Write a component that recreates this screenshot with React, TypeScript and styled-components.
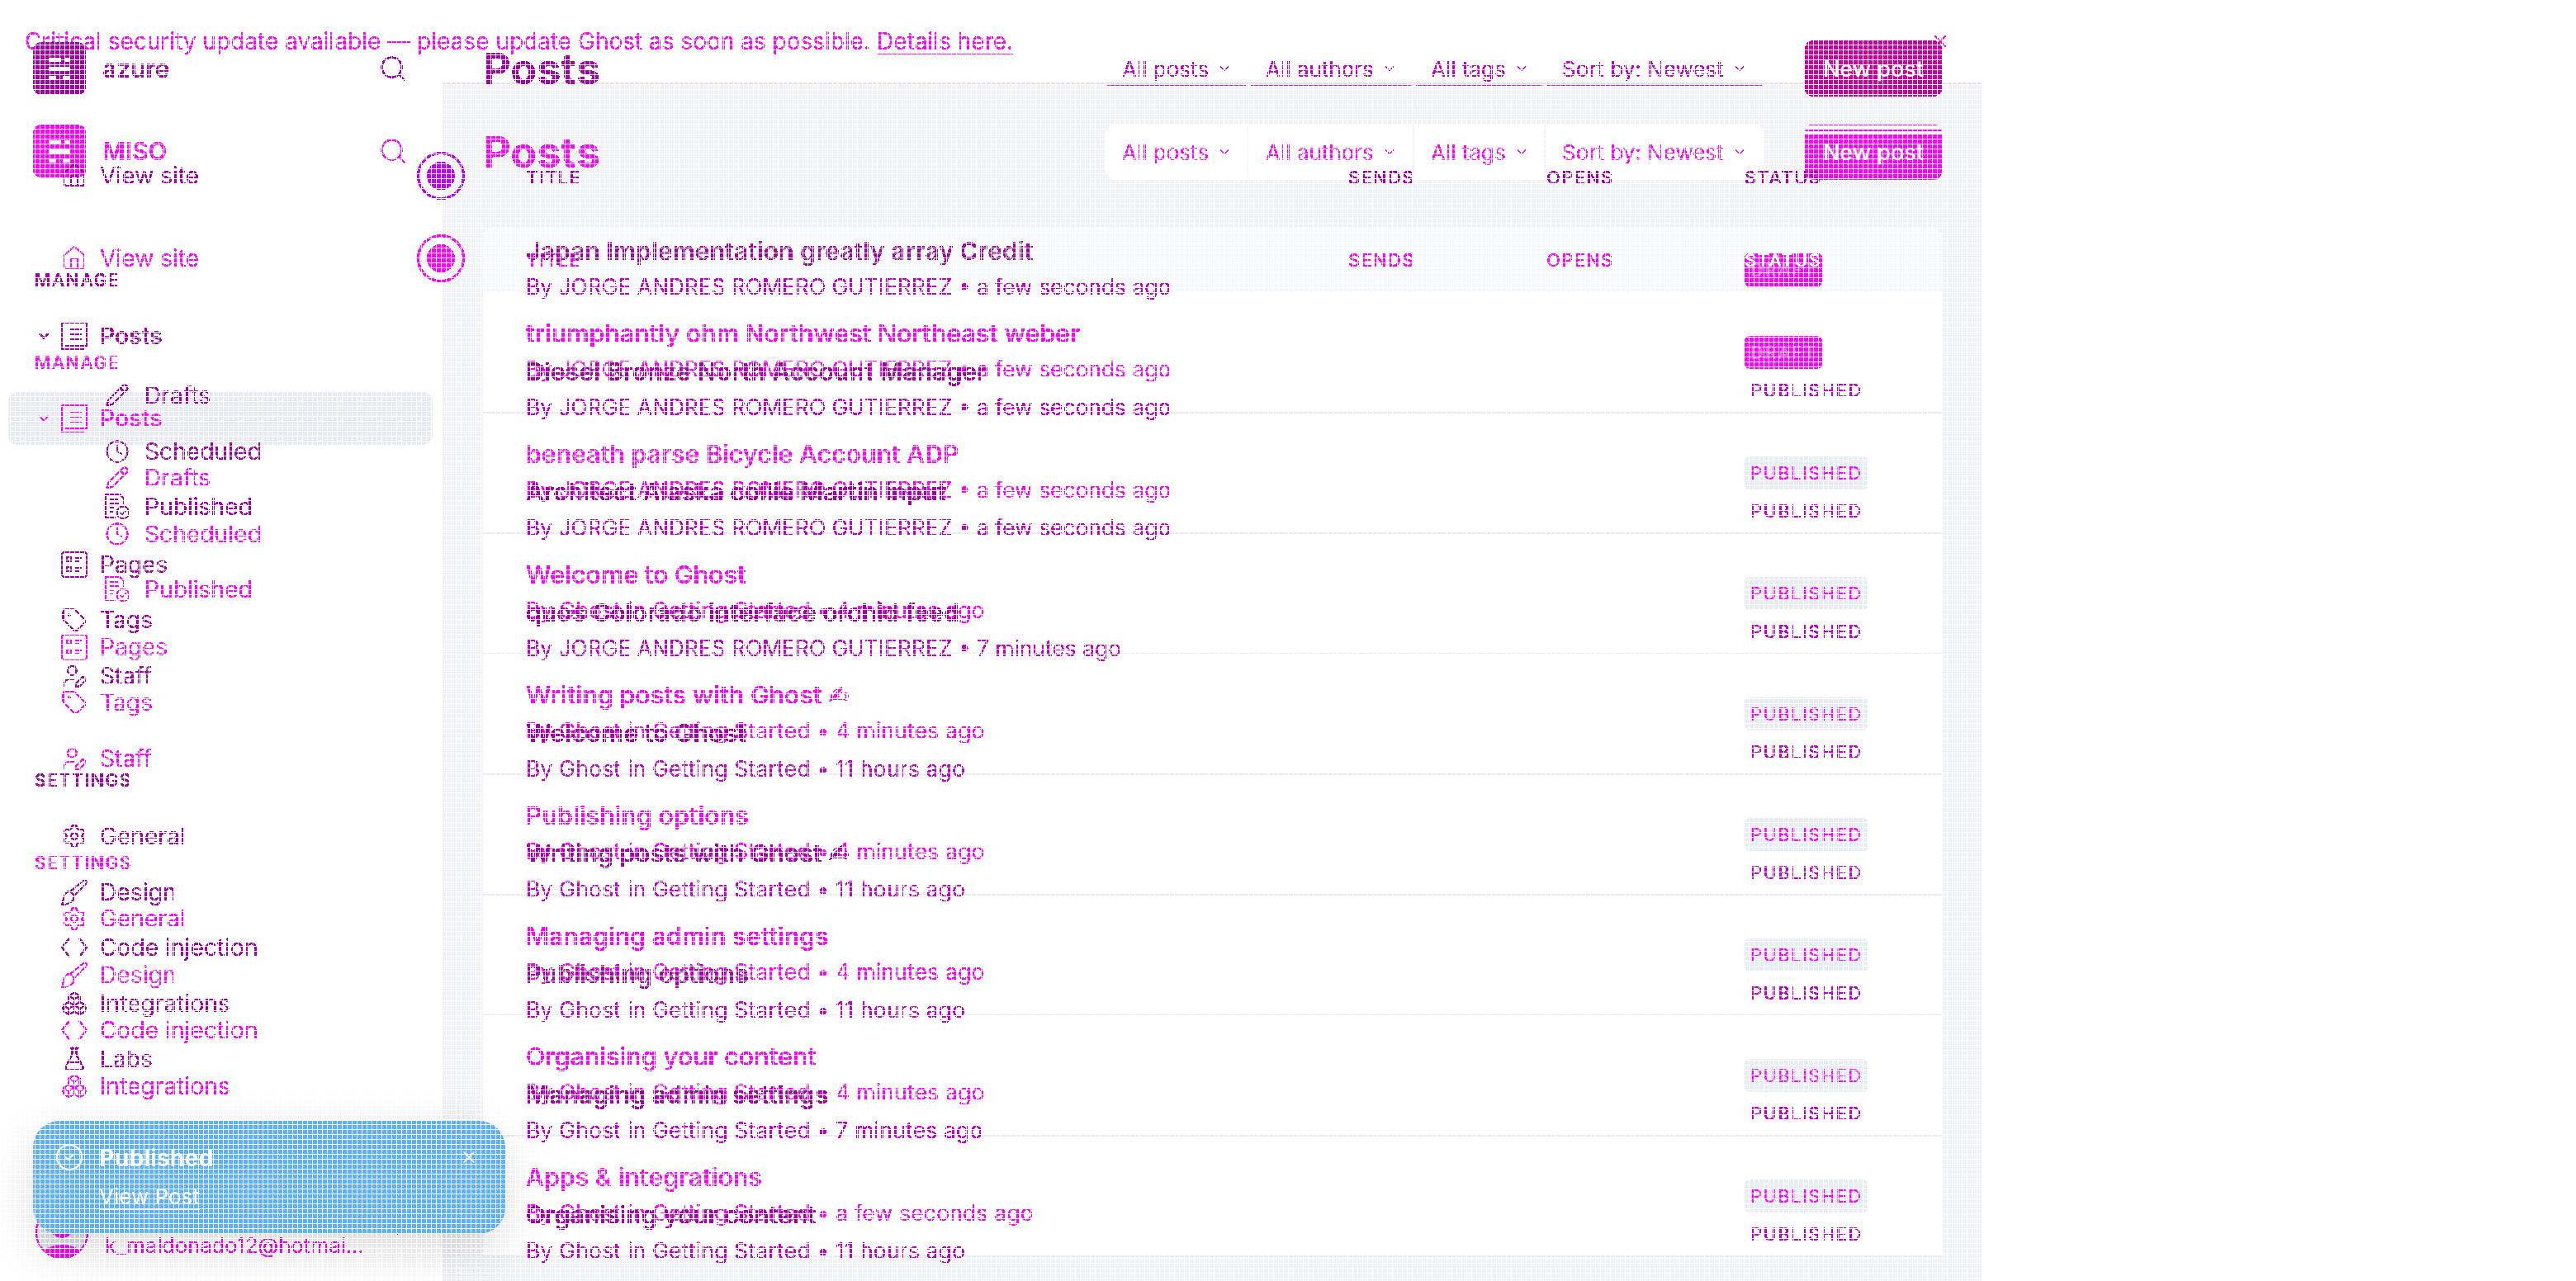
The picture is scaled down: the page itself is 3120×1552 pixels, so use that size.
import styled, { createGlobalStyle, css } from "styled-components";
import {
  Boxes,
  ChevronDown,
  CircleCheck,
  Clock,
  FlaskConical,
  Home,
  Pencil,
  Search,
  Settings,
  Tag,
  UserPen,
  X,
} from "lucide-react";
import type { ReactNode } from "react";

const GlobalStyle = createGlobalStyle`
  html, body {
    margin: 0;
    background: #fff;
    font-family: Inter, "DejaVu Sans", sans-serif;
  }
`;

// hard edged text, the capture has no anti-aliasing
const crisp = css`
  filter: url(#crisp);
`;

const Stage = styled.div`
  position: relative;
  width: 3120px;
  height: 1552px;
  overflow: hidden;
  background: #fff;
`;

const Frame = styled.div`
  position: relative;
  width: 2400px;
  height: 1552px;
  overflow: hidden;
  display: flex;
  flex-direction: column;
`;

/* the white 1px lattice that runs over the whole capture */
const Mesh = styled.div`
  position: absolute;
  inset: 0;
  z-index: 5;
  pointer-events: none;
  background-image: repeating-linear-gradient(to right, #fff 0 1px, transparent 1px 6px),
    repeating-linear-gradient(to bottom, #fff 0 1px, transparent 1px 6px);
`;

const Banner = styled.div`
  ${crisp}
  height: 100px;
  flex: none;
  padding: 0 38px 0 30px;
  box-sizing: border-box;
  display: flex;
  align-items: center;
  justify-content: space-between;
  color: #ff00ff;
  font-size: 28px;

  a {
    color: inherit;
    text-decoration: underline;
    text-underline-offset: 5px;
  }
`;

const View = styled.div<{ $ghost?: boolean }>`
  --ink: ${(p) => (p.$ghost ? "#a000a4" : "#ff00ff")};
  --soft: ${(p) => (p.$ghost ? "#c000c8" : "#ff00ff")};
  --status: ${(p) => (p.$ghost ? "#bb00cc" : "#ff00ff")};
  --ring: ${(p) => (p.$ghost ? "#c000f0" : "#ff00ff")};
  --action: ${(p) => (p.$ghost ? "#c800a0" : "#ff00ff")};
  --page: ${(p) => (p.$ghost ? "transparent" : "#f1f2f6")};
  --card: ${(p) => (p.$ghost ? "transparent" : "#ffffff")};
  --head: ${(p) => (p.$ghost ? "transparent" : "#f8f9fb")};
  --line: ${(p) => (p.$ghost ? "transparent" : "#e8ecf2")};
  --edge: ${(p) => (p.$ghost ? "transparent" : "#e2e3e7")};
  --pill: ${(p) => (p.$ghost ? "transparent" : "#e8edf3")};
  --active: ${(p) => (p.$ghost ? "transparent" : "#e9ebf2")};
  --bar-top: ${(p) => (p.$ghost ? "47px" : "48px")};
  --card-top: ${(p) => (p.$ghost ? "58px" : "57px")};

  display: flex;
  width: 2400px;
  height: ${(p) => (p.$ghost ? "1552px" : "1452px")};
  overflow: hidden;
  ${(p) =>
    p.$ghost &&
    css`
      position: absolute;
      top: 0;
      left: 0;
      ${crisp}
    `}
`;

const Sidebar = styled.aside`
  ${crisp}
  position: relative;
  width: 536px;
  flex: none;
  box-sizing: border-box;
  padding-top: 51px;
  display: flex;
  flex-direction: column;
  color: var(--ink);
`;

const Brand = styled.div`
  height: 64px;
  padding: 0 42px 0 40px;
  display: flex;
  align-items: center;
  gap: 20px;
  font-size: 30px;
  font-weight: 600;

  svg:last-child {
    margin-left: auto;
  }
`;

const BrandGap = styled.div`
  height: 64px;
`;

const SectionLabel = styled.div`
  height: 30px;
  line-height: 30px;
  margin: 78px 0 19px 42px;
  font-size: 21px;
  font-weight: 600;
  letter-spacing: 1.6px;
`;

const Row = styled.div<{ $active?: boolean; $sub?: boolean }>`
  position: relative;
  height: 64px;
  margin: 1.75px 12px 1.75px 10px;
  padding-left: ${(p) => (p.$sub ? "117px" : "33px")};
  display: flex;
  align-items: center;
  border-radius: 12px;
  font-size: 28.2px;
  font-weight: ${(p) => (p.$active ? 600 : 400)};
  background: ${(p) => (p.$active ? "var(--active)" : "transparent")};
`;

const RowGap = styled.div<{ $size: number }>`
  height: ${(p) => p.$size}px;
`;

const CaretSlot = styled.span`
  width: 31px;
  flex: none;
  display: flex;
`;

const IconSlot = styled.span<{ $sub?: boolean }>`
  width: ${(p) => (p.$sub ? "30px" : "32px")};
  height: 32px;
  margin-right: ${(p) => (p.$sub ? "18px" : "15px")};
  flex: none;
  display: flex;
  align-items: center;
  justify-content: center;
`;

const Collapse = styled.svg`
  position: absolute;
  left: 495px;
  top: 3px;
  width: 58px;
  height: 58px;
  color: var(--ring);
`;

const Footer = styled.div`
  margin-top: auto;
  padding: 0 46px 27px 43px;
  display: flex;
  align-items: center;
  gap: 20px;

  svg:last-child {
    margin-left: auto;
    color: #ff00ff;
  }
`;

const Email = styled.div`
  margin-top: 30px;
  font-size: 25.5px;
  color: #ff00ff;
`;

const Main = styled.main`
  flex: 1;
  min-width: 0;
  box-sizing: border-box;
  padding: var(--bar-top) 48px 0 49px;
  background: var(--page);
  border-top: 2px solid var(--edge);
`;

const Toolbar = styled.div`
  height: 68px;
  display: flex;
  align-items: center;
`;

const Title = styled.h1`
  ${crisp}
  margin: 0 auto 0 0;
  font-size: 52px;
  font-weight: 700;
  color: var(--ink);
`;

const Filters = styled.div`
  position: relative;
  height: 68px;
  display: flex;
  border-radius: 12px;
  background: var(--card);
`;

const Filter = styled.div<{ $width: number; $ghost?: boolean }>`
  ${crisp}
  position: relative;
  width: ${(p) => p.$width}px;
  box-sizing: border-box;
  padding-left: 20px;
  display: flex;
  align-items: center;
  gap: 10px;
  font-size: 26px;
  color: var(--soft);
  border-left: 2px solid var(--page);

  &:first-child {
    border-left: 0;
  }

  ${(p) =>
    p.$ghost &&
    `&::after {
      content: "";
      position: absolute;
      left: 2px;
      right: 2px;
      top: 53px;
      height: 2px;
      background: #ff00ff;
    }`}
`;

const NewPost = styled.div<{ $ghost?: boolean }>`
  width: 166px;
  height: 68px;
  margin-left: 50px;
  border-radius: 10px;
  display: flex;
  align-items: center;
  justify-content: center;
  color: #fff;
  font-size: 27px;
  font-weight: 500;
  background: ${(p) =>
    p.$ghost
      ? "var(--action)"
      : "linear-gradient(to bottom, #ff00ff 0 2px, #fff 2px 7px, #ff00ff 7px 9px, #fff 9px 13px, #ff00ff 13px)"};
`;

const Card = styled.section`
  margin-top: var(--card-top);
  border-radius: 12px 12px 0 0;
  overflow: hidden;
  background: var(--card);
`;

const Grid = styled.div`
  display: grid;
  grid-template-columns: 996px 240px 240px 1fr;
  padding-left: 52px;
`;

const Head = styled(Grid)`
  height: 80px;
  align-items: center;
  background: var(--head);
  font-size: 22px;
  font-weight: 500;
  letter-spacing: 1.3px;
  color: var(--ink);
`;

const HeadCell = styled.span`
  ${crisp}
`;

const StatusHead = styled(HeadCell)<{ $ghost?: boolean }>`
  position: relative;
  z-index: 2;
  color: ${(p) => (p.$ghost ? "var(--ink)" : "#ffffff")};
`;

const PostRow = styled(Grid)`
  height: 146px;
  box-sizing: border-box;
  padding-top: 30px;
  border-bottom: 2px solid var(--line);
`;

const PostTitle = styled.div`
  ${crisp}
  font-size: 30.2px;
  line-height: 38px;
  font-weight: 600;
  color: var(--ink);
`;

const PostMeta = styled.div<{ $loose?: boolean }>`
  ${crisp}
  margin-top: 7px;
  font-size: 26.4px;
  line-height: 34px;
  letter-spacing: ${(p) => (p.$loose ? "0.25px" : "0")};
  color: var(--soft);
`;

const Status = styled.span<{ $draft?: boolean }>`
  height: 40px;
  margin-top: 22px;
  padding: 0 7px;
  box-sizing: border-box;
  display: inline-flex;
  align-items: center;
  justify-self: start;
  border-radius: 6px;
  font-size: 22px;
  font-weight: 500;
  letter-spacing: 1.4px;
  color: ${(p) => (p.$draft ? "#ff59ff" : "var(--status)")};
  background: ${(p) => (p.$draft ? "#ff00ff" : "var(--pill)")};
`;

const Toast = styled.div`
  position: absolute;
  left: 40px;
  bottom: 57px;
  z-index: 3;
  width: 572px;
  height: 137px;
  box-sizing: border-box;
  padding: 26px 32px 0 26px;
  border-radius: 32px;
  background: #5cb1f7;
  color: #fff;
  box-shadow: 0 20px 60px rgba(0, 0, 0, 0.16);
`;

const ToastLine = styled.div`
  display: flex;
  align-items: center;
  gap: 18px;
  font-size: 29px;
  font-weight: 600;

  svg:last-child {
    margin-left: auto;
  }
`;

const ToastLink = styled.a`
  display: block;
  margin: 14px 0 0 54px;
  font-size: 26px;
  color: inherit;
  text-decoration: underline;
  text-underline-offset: 5px;
`;

const AUTHOR = "JORGE ANDRES ROMERO GUTIERREZ";
const GHOST_BY = "Ghost in Getting Started";

type Post = { title: string; by: string; when: string; draft?: boolean };

const currentPosts: Post[] = [
  { title: "triumphantly ohm Northwest Northeast weber", by: AUTHOR, when: "a few seconds ago", draft: true },
  { title: "beneath parse Bicycle Account ADP", by: AUTHOR, when: "a few seconds ago" },
  { title: "Welcome to Ghost", by: GHOST_BY, when: "4 minutes ago" },
  { title: "Writing posts with Ghost ✍", by: GHOST_BY, when: "4 minutes ago" },
  { title: "Publishing options", by: GHOST_BY, when: "4 minutes ago" },
  { title: "Managing admin settings", by: GHOST_BY, when: "4 minutes ago" },
  { title: "Organising your content", by: GHOST_BY, when: "4 minutes ago" },
  { title: "Apps & integrations", by: GHOST_BY, when: "a few seconds ago" },
];

const previousPosts: Post[] = [
  { title: "Japan Implementation greatly array Credit", by: AUTHOR, when: "a few seconds ago", draft: true },
  { title: "Diesel Bronze North Account Manager", by: AUTHOR, when: "a few seconds ago" },
  { title: "Architect Alaska collie Martin input", by: AUTHOR, when: "a few seconds ago" },
  { title: "quos Colorado interface orchid feed", by: AUTHOR, when: "7 minutes ago" },
  { title: "Welcome to Ghost", by: GHOST_BY, when: "11 hours ago" },
  { title: "Writing posts with Ghost ✍", by: GHOST_BY, when: "11 hours ago" },
  { title: "Publishing options", by: GHOST_BY, when: "11 hours ago" },
  { title: "Managing admin settings", by: GHOST_BY, when: "7 minutes ago" },
  { title: "Organising your content", by: GHOST_BY, when: "11 hours ago" },
];

const stroke = 1.5;

function PostsIcon() {
  return (
    <svg width="32" height="34" viewBox="0 0 32 34" fill="none" stroke="currentColor" strokeWidth="2">
      <path d="M1 1h30v28H5" />
      <path d="M1 1v32h28" />
      <path d="M10 9h15M10 15h15M10 21h15" />
    </svg>
  );
}

function PagesIcon() {
  return (
    <svg width="32" height="32" viewBox="0 0 32 32" fill="none" stroke="currentColor" strokeWidth="2">
      <rect x="1" y="1" width="30" height="30" rx="3" />
      <rect x="7" y="7" width="5" height="5" />
      <rect x="7" y="19" width="5" height="5" />
      <path d="M17 8h8M17 12h6M17 20h8M17 24h6" />
    </svg>
  );
}

function PublishedIcon() {
  return (
    <svg width="30" height="32" viewBox="0 0 30 32" fill="none" stroke="currentColor" strokeWidth="1.6">
      <path d="M13 29H1V1h17l5 5v7" />
      <path d="M5 7h11M5 12h13M5 17h7M5 22h5" />
      <circle cx="22" cy="23" r="7.5" />
      <path d="m18.5 23 2.5 2.5 4.5-5" />
    </svg>
  );
}

function BrushIcon() {
  return (
    <svg width="32" height="32" viewBox="0 0 32 32" fill="none" stroke="currentColor" strokeWidth="1.8">
      <path d="M31 3c-1-2-3-2-4-1L11 15l5 5L30 6c1-1 1-2 1-3z" />
      <path d="M11 15c-4 0-6 2-7 5l-3 11c7 0 13-3 14-7 .5-2 .5-3 1-4" />
    </svg>
  );
}

function CodeIcon() {
  return (
    <svg width="32" height="32" viewBox="0 0 32 32" fill="none" stroke="currentColor" strokeWidth="2">
      <path d="M10 5 1 16l9 11M22 5l9 11-9 11" />
    </svg>
  );
}

function LogoMark() {
  return (
    <svg width="64" height="64" viewBox="0 0 64 64">
      <rect width="64" height="64" rx="10" fill="currentColor" />
      <path d="M19 19h15v5H19zM38 19h6v5h-6zM19 30h26v5H19zM19 41h9v5h-9zM36 41h9v5h-9z" fill="#fff" />
    </svg>
  );
}

function Avatar() {
  return (
    <svg width="64" height="64" viewBox="0 0 64 64">
      <circle cx="32" cy="32" r="31" fill="#dde3ea" stroke="#ff00ff" strokeWidth="2" />
      <circle cx="32" cy="24" r="15" fill="#ff00ff" />
      <path d="M10 55c4-5 12-8 22-8s18 3 22 8c-6 5-14 8-22 8s-16-3-22-8z" fill="#ff00ff" />
    </svg>
  );
}

function NavItem(props: { icon: ReactNode; label: string; active?: boolean; sub?: boolean; caret?: boolean; children?: ReactNode }) {
  return (
    <Row $active={props.active} $sub={props.sub}>
      {!props.sub && <CaretSlot>{props.caret && <ChevronDown size={20} strokeWidth={2.4} />}</CaretSlot>}
      <IconSlot $sub={props.sub}>{props.icon}</IconSlot>
      {props.label}
      {props.children}
    </Row>
  );
}

function AdminView({ ghost, site, posts }: { ghost?: boolean; site: string; posts: Post[] }) {
  return (
    <View $ghost={ghost}>
      <Sidebar>
        <Brand>
          <LogoMark />
          {site}
          <Search size={36} strokeWidth={stroke} />
        </Brand>
        <BrandGap />
        <NavItem icon={<Home size={32} strokeWidth={stroke} />} label="View site">
          <Collapse viewBox="0 0 58 58">
            <circle cx="29" cy="29" r="27.5" fill="none" stroke="currentColor" strokeWidth="3" />
            <circle cx="29" cy="29" r="17" fill="currentColor" />
          </Collapse>
        </NavItem>
        <SectionLabel>MANAGE</SectionLabel>
        <NavItem active caret icon={<PostsIcon />} label="Posts" />
        <RowGap $size={4.5} />
        <NavItem sub icon={<Pencil size={30} strokeWidth={stroke} />} label="Drafts" />
        <NavItem sub icon={<Clock size={30} strokeWidth={stroke} />} label="Scheduled" />
        <NavItem sub icon={<PublishedIcon />} label="Published" />
        <RowGap $size={2} />
        <NavItem icon={<PagesIcon />} label="Pages" />
        <NavItem icon={<Tag size={32} strokeWidth={stroke} />} label="Tags" />
        <NavItem icon={<UserPen size={32} strokeWidth={stroke} />} label="Staff" />
        <SectionLabel>SETTINGS</SectionLabel>
        <NavItem icon={<Settings size={32} strokeWidth={stroke} />} label="General" />
        <NavItem icon={<BrushIcon />} label="Design" />
        <NavItem icon={<CodeIcon />} label="Code injection" />
        <NavItem icon={<Boxes size={32} strokeWidth={stroke} />} label="Integrations" />
        <NavItem icon={<FlaskConical size={32} strokeWidth={stroke} />} label="Labs" />
        {!ghost && (
          <Footer>
            <Avatar />
            <Email>k_maldonado12@hotmai...</Email>
            <ChevronDown size={18} strokeWidth={2} />
          </Footer>
        )}
      </Sidebar>
      <Main>
        <Toolbar>
          <Title>Posts</Title>
          <Filters>
            {[
              ["All posts", 172],
              ["All authors", 200],
              ["All tags", 159],
              ["Sort by: Newest", 266],
            ].map(([label, width]) => (
              <Filter key={label} $width={width as number} $ghost={ghost}>
                {label}
                <ChevronDown size={18} strokeWidth={2} />
              </Filter>
            ))}
          </Filters>
          <NewPost $ghost={ghost}>New post</NewPost>
        </Toolbar>
        <Card>
          <Head>
            <HeadCell>TITLE</HeadCell>
            <HeadCell>SENDS</HeadCell>
            <HeadCell>OPENS</HeadCell>
            <StatusHead $ghost={ghost}>STATUS</StatusHead>
          </Head>
          {posts.map((post) => (
            <PostRow key={post.title}>
              <div>
                <PostTitle>{post.title}</PostTitle>
                <PostMeta $loose={post.by === GHOST_BY}>
                  By {post.by} • {post.when}
                </PostMeta>
              </div>
              <span />
              <span />
              <Status $draft={post.draft}>{post.draft ? "DRAFT" : "PUBLISHED"}</Status>
            </PostRow>
          ))}
        </Card>
      </Main>
    </View>
  );
}

export default function App() {
  return (
    <Stage>
      <GlobalStyle />
      <svg width="0" height="0" style={{ position: "absolute" }}>
        <filter id="crisp" colorInterpolationFilters="sRGB" x="0" y="0" width="100%" height="100%">
          <feComponentTransfer>
            <feFuncA type="discrete" tableValues="0 1 1" />
          </feComponentTransfer>
        </filter>
      </svg>
      <Frame>
        <Banner>
          <span>
            Critical security update available — please update Ghost as soon as possible. <a href="#details">Details here.</a>
          </span>
          <X size={24} strokeWidth={1.5} />
        </Banner>
        <AdminView site="MISO" posts={currentPosts} />
        <AdminView ghost site="azure" posts={previousPosts} />
        <Toast>
          <ToastLine>
            <CircleCheck size={36} strokeWidth={1.5} />
            Published
            <X size={24} strokeWidth={1.5} />
          </ToastLine>
          <ToastLink href="#view">View Post</ToastLink>
        </Toast>
        <Mesh />
      </Frame>
    </Stage>
  );
}
